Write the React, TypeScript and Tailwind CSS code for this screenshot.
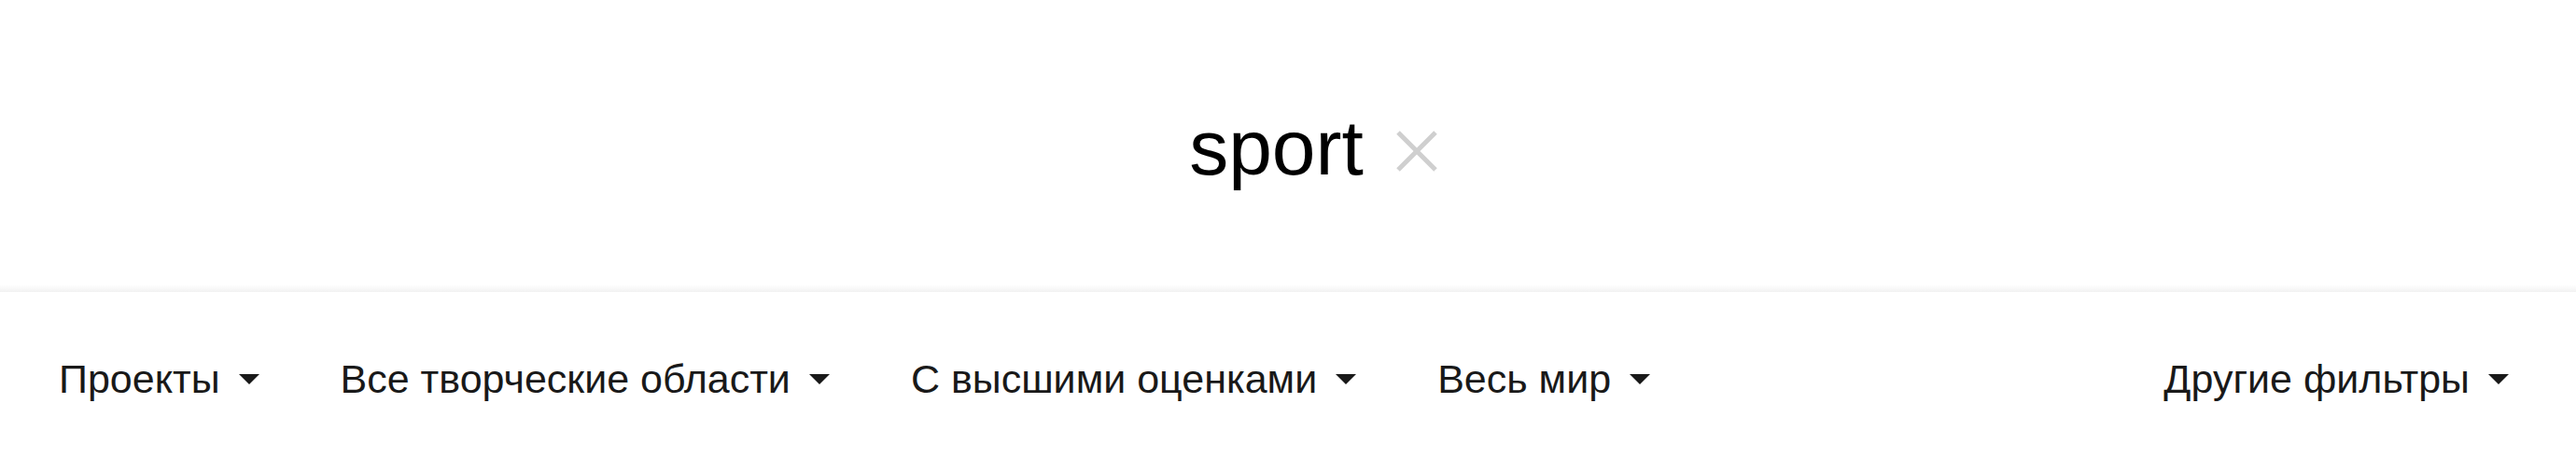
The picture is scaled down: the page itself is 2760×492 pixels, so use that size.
export default function App() {
  const filters = ["Проекты", "Все творческие области", "С высшими оценками", "Весь мир"];

  return (
    <div className="w-[2760px] h-[492px] bg-white text-[#191919] font-['Liberation_Sans',Arial,sans-serif]">
      <div className="flex h-[305px] items-center justify-center">
        <div className="ml-[54px] flex items-center gap-[35px] pt-[10px]">
          <span className="text-[84px] leading-none text-black">sport</span>
          <svg width="44" height="44" viewBox="0 0 44 44" className="mt-[8px]">
            <path d="M2 2 L42 42 M42 2 L2 42" stroke="#cfcfcf" strokeWidth="5" />
          </svg>
        </div>
      </div>
      <div className="h-[8px] bg-gradient-to-b from-white to-[#f2f2f2]" />
      <div className="flex h-[179px] items-center justify-between pl-[63px] pr-[72px] pt-[8px]">
        <div className="flex items-center gap-[87px]">
          {filters.map((f) => (
            <FilterButton key={f} label={f} />
          ))}
        </div>
        <FilterButton label="Другие фильтры" />
      </div>
    </div>
  );
}

function FilterButton({ label }: { label: string }) {
  return (
    <button className="flex items-center gap-[20px] text-[43px] leading-none">
      <span>{label}</span>
      <svg width="22" height="11" viewBox="0 0 22 11">
        <path d="M0 0 H22 L11 11 Z" fill="#191919" />
      </svg>
    </button>
  );
}
